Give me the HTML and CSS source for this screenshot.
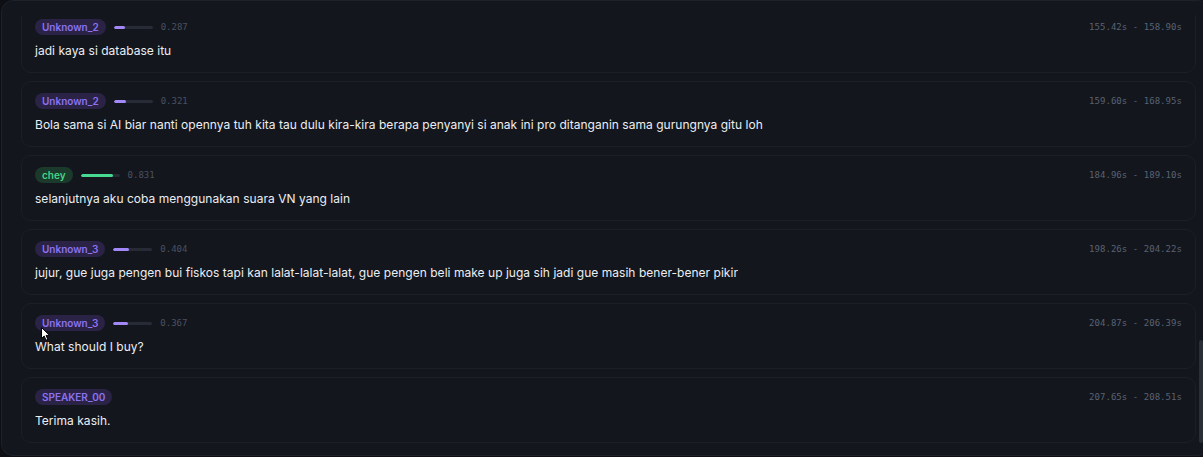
FILE: index.html
```html
<!DOCTYPE html>
<html lang="id">
<head>
<meta charset="utf-8">
<title>Transcript segments</title>
<link rel="stylesheet" href="styles.css">
</head>
<body>
<div class="panel">
  <div class="viewport">
    <div class="list">
      <div class="seg">
        <div class="seg-head">
          <div class="meta">
            <span class="badge purple">Unknown_2</span>
            <span class="bar"><span class="fill purple-fill" style="width:28.7%"></span></span>
            <span class="score">0.287</span>
          </div>
          <span class="time">155.42s - 158.90s</span>
        </div>
        <p class="text">jadi kaya si database itu</p>
      </div>
      <div class="seg">
        <div class="seg-head">
          <div class="meta">
            <span class="badge purple">Unknown_2</span>
            <span class="bar"><span class="fill purple-fill" style="width:32.1%"></span></span>
            <span class="score">0.321</span>
          </div>
          <span class="time">159.60s - 168.95s</span>
        </div>
        <p class="text">Bola sama si AI biar nanti opennya tuh kita tau dulu kira-kira berapa penyanyi si anak ini pro ditanganin sama gurungnya gitu loh</p>
      </div>
      <div class="seg">
        <div class="seg-head">
          <div class="meta">
            <span class="badge green">chey</span>
            <span class="bar"><span class="fill green-fill" style="width:83.1%"></span></span>
            <span class="score">0.831</span>
          </div>
          <span class="time">184.96s - 189.10s</span>
        </div>
        <p class="text">selanjutnya aku coba menggunakan suara VN yang lain</p>
      </div>
      <div class="seg">
        <div class="seg-head">
          <div class="meta">
            <span class="badge purple">Unknown_3</span>
            <span class="bar"><span class="fill purple-fill" style="width:40.4%"></span></span>
            <span class="score">0.404</span>
          </div>
          <span class="time">198.26s - 204.22s</span>
        </div>
        <p class="text">jujur, gue juga pengen bui fiskos tapi kan lalat-lalat-lalat, gue pengen beli make up juga sih jadi gue masih bener-bener pikir</p>
      </div>
      <div class="seg">
        <div class="seg-head">
          <div class="meta">
            <span class="badge purple">Unknown_3</span>
            <span class="bar"><span class="fill purple-fill" style="width:36.7%"></span></span>
            <span class="score">0.367</span>
          </div>
          <span class="time">204.87s - 206.39s</span>
        </div>
        <p class="text">What should I buy?</p>
      </div>
      <div class="seg">
        <div class="seg-head">
          <div class="meta">
            <span class="badge purple">SPEAKER_00</span>
          </div>
          <span class="time">207.65s - 208.51s</span>
        </div>
        <p class="text">Terima kasih.</p>
      </div>
    </div>
  </div>
</div>
<div class="scroll-thumb"></div>
<svg class="cursor" width="10" height="15" viewBox="0 0 10 15" aria-hidden="true">
  <path d="M0.5 0.5 L0.5 11.5 L3.2 9 L5 13.2 L6.8 12.4 L5.1 8.4 L8.6 8.4 Z" fill="#ffffff" stroke="#000000" stroke-width="1"/>
</svg>
</body>
</html>
```

FILE: styles.css
```css
html, body {
  margin: 0;
  padding: 0;
}
body {
  background: #0d0f14;
  width: 1203px;
  height: 457px;
  overflow: hidden;
  position: relative;
  font-family: Inter, "Noto Sans", "Liberation Sans", sans-serif;
}
.panel {
  box-sizing: border-box;
  margin-left: 1px;
  width: 1209px;
  height: 456px;
  border: 1px solid #1d2129;
  border-radius: 12px;
  background: #13161d;
  padding: 14px 13px 0 19px;
}
.viewport {
  height: 440px;
  overflow: hidden;
}
.list {
  margin-top: -8px;
  display: flex;
  flex-direction: column;
  gap: 8px;
}
.seg {
  box-sizing: border-box;
  height: 66px;
  border: 1px solid #1c1f27;
  border-radius: 10px;
  background: #13161d;
  padding: 11px 13px 11px 13px;
  display: flex;
  flex-direction: column;
  gap: 7px;
}
.seg-head {
  display: flex;
  justify-content: space-between;
  align-items: center;
  height: 16px;
}
.meta {
  display: flex;
  align-items: center;
  gap: 8px;
}
.badge {
  display: inline-flex;
  align-items: center;
  height: 16px;
  padding: 0 7px;
  border-radius: 8px;
  font-size: 10px;
  font-weight: 600;
  line-height: 16px;
}
.badge.purple {
  background: #2a2346;
  color: #8c72f2;
}
.badge.green {
  background: #1b3a2c;
  color: #45d489;
}
.bar {
  display: block;
  width: 39px;
  height: 3px;
  border-radius: 2px;
  background: #272b35;
  overflow: hidden;
}
.fill {
  display: block;
  height: 100%;
  border-radius: 2px;
}
.purple-fill { background: #a287f8; }
.green-fill { background: #47d991; }
.score {
  font-family: "DejaVu Sans Mono", "Liberation Mono", monospace;
  font-size: 9px;
  color: #4a5161;
}
.time {
  font-family: "DejaVu Sans Mono", "Liberation Mono", monospace;
  font-size: 9px;
  letter-spacing: 0.05px;
  color: #5a6272;
}
.text {
  margin: 0;
  font-size: 12px;
  line-height: 18px;
  letter-spacing: 0.03px;
  color: #eceef2;
  white-space: nowrap;
}
.scroll-thumb {
  position: absolute;
  left: 1199px;
  top: 340px;
  width: 4px;
  height: 103px;
  border-radius: 2px;
  background: #2a2e37;
}
.cursor {
  position: absolute;
  left: 41px;
  top: 327px;
}
```
